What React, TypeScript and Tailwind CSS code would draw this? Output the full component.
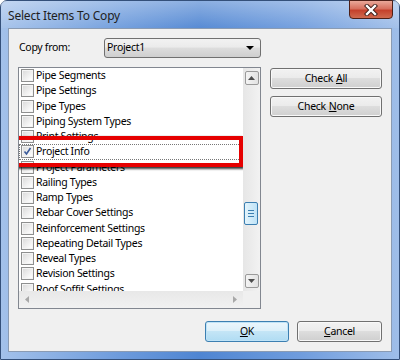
import React from 'react';

const items = [
  'Pipe Segments',
  'Pipe Settings',
  'Pipe Types',
  'Piping System Types',
  'Print Settings',
  'Project Info',
  'Project Parameters',
  'Railing Types',
  'Ramp Types',
  'Rebar Cover Settings',
  'Reinforcement Settings',
  'Repeating Detail Types',
  'Reveal Types',
  'Revision Settings',
  'Roof Soffit Settings',
];

function Checkbox({ checked }: { checked?: boolean }) {
  return (
    <span className="w-[13px] h-[13px] shrink-0 border border-[#8e8f8f] bg-white flex items-center justify-center">
      <span className="w-[11px] h-[11px] border border-[#f4f4f4] bg-[linear-gradient(135deg,#dcdcdc,#ffffff)] flex items-center justify-center">
        {checked && (
          <svg width="9" height="9" viewBox="0 0 9 9">
            <path d="M1.5 4.5 L3.5 7 L7.5 1" fill="none" stroke="#3a5a9a" strokeWidth="1.6" />
          </svg>
        )}
      </span>
    </span>
  );
}

function WinButton({ children, primary, className }: { children: React.ReactNode; primary?: boolean; className?: string }) {
  return (
    <div
      className={
        'h-[21px] rounded-[3px] border flex items-center justify-center text-black ' +
        (primary
          ? 'border-[#3c7fb1] bg-[linear-gradient(180deg,#ecf6fc_0%,#dcf0fa_45%,#c4e5f6_50%,#b0dcf3_100%)] shadow-[inset_0_0_0_1px_#bfe3f7]'
          : 'border-[#707070] bg-[linear-gradient(180deg,#f2f2f2_0%,#ebebeb_45%,#dddddd_50%,#cfcfcf_100%)] shadow-[inset_0_0_0_1px_#f8f8f8]') +
        ' ' +
        (className || '')
      }
    >
      {children}
    </div>
  );
}

function ArrowBtn({ dir }: { dir: 'up' | 'down' }) {
  return (
    <div className="w-[14px] h-[14px] mx-auto rounded-[2px] border border-[#9a9a9a] bg-[linear-gradient(90deg,#f4f4f4,#e2e2e2)] flex items-center justify-center">
      <svg width="7" height="4" viewBox="0 0 7 4">
        <path d={dir === 'up' ? 'M0 4 L3.5 0 L7 4 Z' : 'M0 0 L3.5 4 L7 0 Z'} fill="#4d4d4d" />
      </svg>
    </div>
  );
}

export default function App() {
  return (
    <div
      className="w-[400px] h-[360px] bg-white overflow-hidden text-black text-[10.5px] tracking-[-0.3px]"
      style={{ fontFamily: '"Noto Sans", "Open Sans", sans-serif' }}
    >
      <div className="w-[400px] h-[360px] rounded-t-[7px] border border-[#34507a] bg-[linear-gradient(90deg,#a3c1ea_0%,#6d9bdc_30%,#4f85d2_50%,#6f9cdd_75%,#9fbee9_100%)] flex flex-col">
        {/* title bar */}
        <div className="h-[27px] flex items-start justify-between pl-[7px] pr-[6px] bg-[linear-gradient(180deg,rgba(255,255,255,0.35),rgba(255,255,255,0.05))]">
          <span className="text-[12px] tracking-[-0.2px] leading-[27px] text-[#1e1e1e] pt-[1px]">Select Items To Copy</span>
          <div className="w-[44px] h-[19px] -mt-[1px] rounded-b-[4px] border border-[#4d1f17] bg-[linear-gradient(180deg,#e9a899_0%,#d6705e_45%,#c4412c_55%,#cf6a4f_100%)] flex items-center justify-center">
            <svg width="14" height="12" viewBox="0 0 14 12">
              <path d="M3 2 L11 10 M11 2 L3 10" stroke="#3a1a14" strokeWidth="4.2" strokeLinecap="square" />
              <path d="M3 2 L11 10 M11 2 L3 10" stroke="#ffffff" strokeWidth="2.4" strokeLinecap="square" />
            </svg>
          </div>
        </div>

        {/* client area */}
        <div className="mx-[7px] h-[324px] border border-[#8a9bb3] bg-[#f0f0f0] flex flex-col px-[9px] pt-[9px]">
          <div className="flex items-center h-[20px]">
            <span className="w-[86px] pl-[1px]">Copy from:</span>
            <div className="w-[157px] h-[20px] rounded-[3px] border border-[#707070] bg-[linear-gradient(180deg,#f2f2f2_0%,#ebebeb_45%,#dddddd_50%,#cfcfcf_100%)] flex items-center justify-between pl-[2px] pr-[6px]">
              <span>Project1</span>
              <svg width="8" height="4" viewBox="0 0 8 4">
                <path d="M0 0 L8 0 L4 4 Z" fill="#000" />
              </svg>
            </div>
          </div>

          <div className="flex mt-[9px] gap-[9px]">
            {/* listbox */}
            <div className="w-[243px] h-[242px] border border-[#828790] bg-white flex flex-col">
              <div className="flex flex-1 min-h-0">
                <div className="flex-1 overflow-hidden">
                  {items.map((it) => (
                    <div
                      key={it}
                      className={
                        'relative h-[15.25px] flex items-center pl-[2px] gap-[2px] whitespace-nowrap ' +
                        (it === 'Project Info' ? 'z-10 outline-1 outline-dotted outline-[#777] -outline-offset-1' : '')
                      }
                    >
                      <Checkbox checked={it === 'Project Info'} />
                      <span className="leading-[15px]">{it}</span>
                      {it === 'Project Info' && (
                        <span className="absolute -left-[6px] right-0 -top-[8px] -bottom-[7px] border-[4px] border-[#e60000] shadow-[1px_2px_2px_rgba(0,0,0,0.75),-1px_0_1px_rgba(0,0,0,0.4)]" />
                      )}
                    </div>
                  ))}
                </div>
                {/* vertical scrollbar */}
                <div className="w-[17px] bg-[linear-gradient(90deg,#e6e6e6,#f2f2f2)] flex flex-col py-[3px]">
                  <ArrowBtn dir="up" />
                  <div className="flex-1 relative">
                    <div className="absolute left-[1px] right-[2px] top-[117px] h-[23px] rounded-[2px] border border-[#3c7fb1] bg-[linear-gradient(90deg,#e3f4fc,#bfe3f7)] flex flex-col items-center justify-center gap-[2px]">
                      <span className="w-[6px] h-[1px] bg-[#3c7fb1]" />
                      <span className="w-[6px] h-[1px] bg-[#3c7fb1]" />
                      <span className="w-[6px] h-[1px] bg-[#3c7fb1]" />
                    </div>
                  </div>
                  <ArrowBtn dir="down" />
                </div>
              </div>
              {/* horizontal scrollbar */}
              <div className="h-[17px] flex">
                <div className="flex-1 bg-[linear-gradient(180deg,#e8e8e8,#f1f1f1)] flex items-center justify-between px-[6px]">
                  <svg width="4" height="7" viewBox="0 0 4 7">
                    <path d="M4 0 L0 3.5 L4 7 Z" fill="#a8a8a8" />
                  </svg>
                  <svg width="4" height="7" viewBox="0 0 4 7">
                    <path d="M0 0 L4 3.5 L0 7 Z" fill="#a8a8a8" />
                  </svg>
                </div>
                <div className="w-[17px] bg-[#f0f0f0]" />
              </div>
            </div>

            {/* right buttons */}
            <div className="w-[112px] flex flex-col pt-[1px] gap-[7px]">
              <WinButton>
                Check <span className="underline ml-[3px]">A</span>ll
              </WinButton>
              <WinButton>
                Check <span className="underline ml-[3px]">N</span>one
              </WinButton>
            </div>
          </div>

          <div className="flex justify-end gap-[8px] mt-[12px]">
            <WinButton primary className="w-[84px]">
              <span className="underline">O</span>K
            </WinButton>
            <WinButton className="w-[85px]">
              <span className="underline">C</span>ancel
            </WinButton>
          </div>
        </div>
      </div>
    </div>
  );
}
